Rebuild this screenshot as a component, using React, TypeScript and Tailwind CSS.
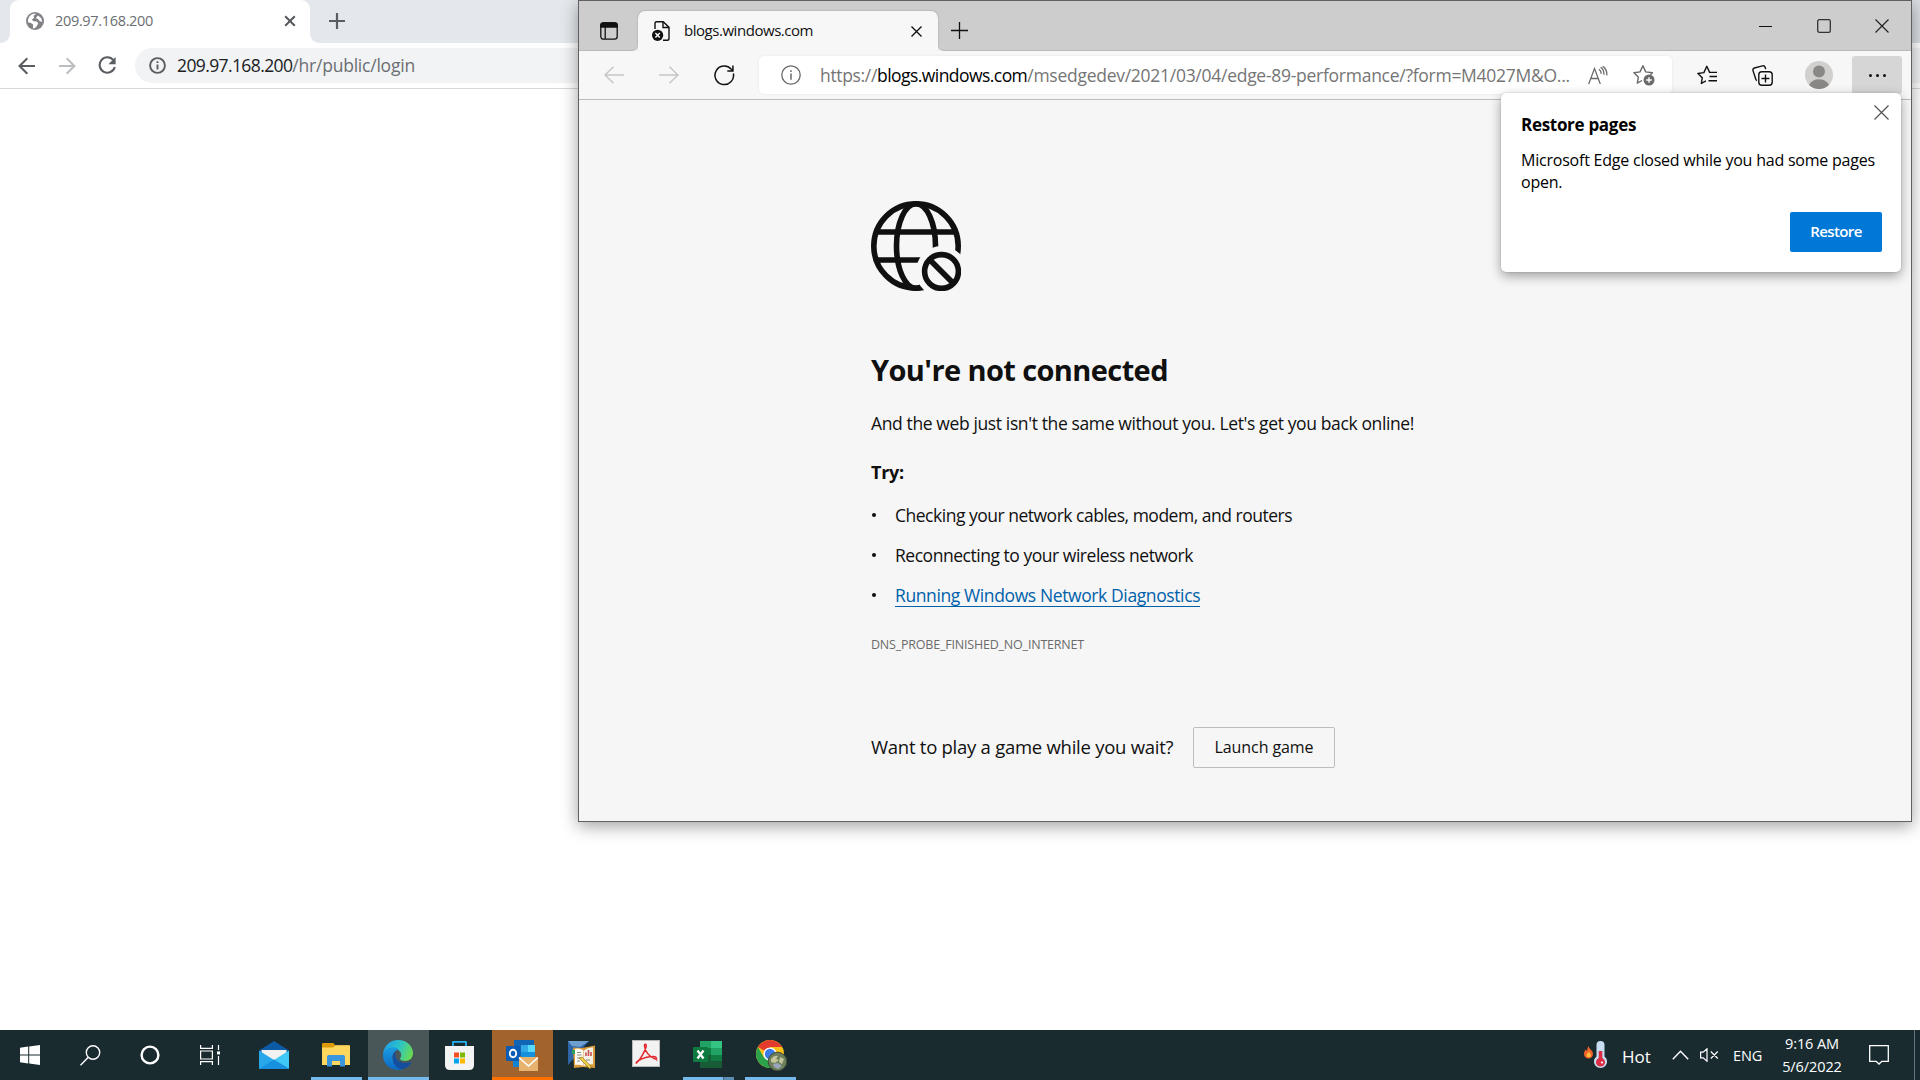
import type { ReactNode } from "react";

function ChromeWindow() {
  return (
    <div className="h-[1030px] bg-white">
      <div className="flex h-[43px] bg-[#e4e8ec]">
        <div className="flex h-[43px] w-2.5 items-end bg-white">
          <div className="h-full w-full rounded-br-[9px] bg-[#e4e8ec]" />
        </div>
        <div className="flex h-[43px] w-[300px] items-center rounded-t-[9px] bg-white pb-px pl-4">
          <svg width="18" height="18" viewBox="0 0 18 18">
            <circle cx="9" cy="9" r="9" fill="#808285" />
            <path d="M10.2 1.8 7.6 3.7 8 6.1l-2.1 1.5 1.5 1.6 3.3.3 1.6 2-1.5 2.4-1.9 2.4-2-.1.2-3.6-2.2-1.7-3-.6C1.7 6 3.8 2.6 7.4 1.7Z" fill="#fff" />
            <path d="m12 3.4 3.3 2.8.9 3.6-2.4-.5-1.6-2.1-2.4-1.2Z" fill="#fff" />
          </svg>
          <span className="-mt-px ml-[11px] text-[14.5px] tracking-[-0.33px] text-[#6b6e72]">209.97.168.200</span>
          <svg className="ml-auto mr-[14px]" width="12" height="12" viewBox="0 0 12 12" stroke="#54585c" strokeWidth="2">
            <path d="m1.2 1.2 9.6 9.6m0-9.6-9.6 9.6" />
          </svg>
        </div>
        <div className="flex flex-1 items-center bg-white">
          <div className="flex h-full w-full items-center rounded-bl-[9px] bg-[#e4e8ec] pb-px pl-[19px]">
            <svg width="16" height="16" viewBox="0 0 16 16" stroke="#5a5e62" strokeWidth="2.2">
              <path d="M8 0v16M0 8h16" />
            </svg>
          </div>
          <div className="h-full w-2 bg-[#dadfe4]" />
        </div>
      </div>
      <div className="flex h-[46px] items-center border-b border-[#d5d7d9] pl-[18px]">
        <svg width="18" height="18" viewBox="0 0 18 18" fill="none" stroke="#5a5e62" strokeWidth="2.1">
          <path d="M17 9H2M9.3 1.3 1.6 9l7.7 7.7" />
        </svg>
        <svg className="ml-[22px]" width="18" height="18" viewBox="0 0 18 18" fill="none" stroke="#bcbfc2" strokeWidth="2.1">
          <path d="M1 9h15M8.700 1.3 16.4 9l-7.700 7.700" />
        </svg>
        <svg className="ml-[22px]" width="19" height="19" viewBox="0 0 19 19" fill="none" stroke="#5a5e62" strokeWidth="2.1">
          <path d="M15.4 4.2A7.7 7.7 0 1 0 16.8 11" />
          <path d="M17.6 1v7.2h-7.2Z" fill="#5a5e62" stroke="none" />
        </svg>
        <div className="ml-[18px] flex h-[35px] flex-1 items-center rounded-l-full bg-[#f1f3f4] pl-3.5">
          <svg width="17" height="17" viewBox="0 0 17 17" fill="none" stroke="#5a5e62">
            <circle cx="8.5" cy="8.5" r="7.4" strokeWidth="1.9" />
            <path d="M8.5 7.4v5M8.5 4.2v1.9" strokeWidth="1.9" />
          </svg>
          <span className="ml-[11px] text-[17.5px] tracking-[-0.61px] text-[#202124]">209.97.168.200</span>
          <span className="text-[17.5px] tracking-[-0.22px] text-[#6b6e72]">/hr/public/login</span>
        </div>
      </div>
    </div>
  );
}

function TitleBar() {
  return (
    <div className="flex h-[50px] bg-[#cdcdcd]">
      <div className="flex w-[59px] items-end bg-[#f7f7f7]">
        <div className="flex h-full w-full items-center rounded-br-[6px] border-b border-[#b9b9b9] bg-[#cdcdcd] pl-[21px] pt-[11px]">
          <svg width="18" height="18" viewBox="0 0 18 18" fill="none" stroke="#111" strokeWidth="1.3">
            <rect x=".8" y=".8" width="16.4" height="16.4" rx="2.6" />
            <path d="M.8 5V3.4Q.8.8 3.4.8h11.2q2.6 0 2.6 2.6V5Z" fill="#111" />
            <path d="M5.2 5v12" />
          </svg>
        </div>
      </div>
      <div className="flex w-[300px] bg-[#cdcdcd] pt-2.5">
        <div className="flex h-10 w-full items-center rounded-t-[7px] bg-[#f7f7f7] pl-[14px] shadow-[0_0_2px_rgba(0,0,0,0.25)] [clip-path:inset(-3px_-3px_0_-3px)]">
          <svg width="18" height="20" viewBox="0 0 18 20" fill="none" stroke="#111" strokeWidth="1.4">
            <path d="M3 8V2.5Q3 .8 4.7.8h6.5L17 6.4v11q0 1.8-1.800 1.800H11" />
            <path d="M11 .9v5.6h6" />
            <circle cx="5.6" cy="14.3" r="5.6" fill="#111" stroke="none" />
            <path d="m3.4 12.1 4.4 4.4m0-4.4-4.4 4.4" stroke="#fff" />
          </svg>
          <span className="-mt-0.5 ml-3.5 text-[15px] tracking-[-0.46px] text-[#111]">blogs.windows.com</span>
          <svg className="ml-auto mr-4 mt-px" width="11" height="11" viewBox="0 0 11 11" stroke="#111" strokeWidth="1.4">
            <path d="m.5.5 10 10m0-10-10 10" />
          </svg>
        </div>
      </div>
      <div className="flex flex-1 bg-[#f7f7f7]">
        <div className="flex h-full w-full rounded-bl-[6px] border-b border-[#b9b9b9] bg-[#cdcdcd]">
          <svg className="ml-[13px] mt-[21px]" width="17" height="17" viewBox="0 0 17 17" stroke="#111" strokeWidth="1.3">
            <path d="M8.5 0v17M0 8.5h17" />
          </svg>
          <div className="ml-auto mr-[22px] mt-[17px] flex h-[15px] items-center">
            <svg width="14" height="14" viewBox="0 0 14 14" stroke="#111" strokeWidth="1">
              <path d="M0 7.5h13" />
            </svg>
            <svg className="ml-11" width="14" height="14" viewBox="0 0 14 14" fill="none" stroke="#333" strokeWidth="1.3">
              <rect x=".7" y=".7" width="12.6" height="12.6" rx="1.6" />
            </svg>
            <svg className="ml-11" width="14" height="14" viewBox="0 0 14 14" stroke="#222" strokeWidth="1.2">
              <path d="m.5.5 13 13m0-13-13 13" />
            </svg>
          </div>
        </div>
      </div>
    </div>
  );
}

function Toolbar() {
  return (
    <div className="flex h-[49px] items-center border-b border-[#bdbdbd] bg-[#f7f7f7] pl-[25px] pr-[9px]">
      <svg width="20" height="18" viewBox="0 0 20 18" fill="none" stroke="#c6c6c6" strokeWidth="1.4">
        <path d="M20 9H1M9.5.7 1 9l8.500 8.300" />
      </svg>
      <svg className="ml-[35px]" width="20" height="18" viewBox="0 0 20 18" fill="none" stroke="#c6c6c6" strokeWidth="1.4">
        <path d="M0 9h19M10.500.7 19 9l-8.500 8.300" />
      </svg>
      <svg className="ml-[35px]" width="21" height="21" viewBox="0 0 21 21" fill="none" stroke="#111" strokeWidth="1.5">
        <path d="M19.400 8.500A9.300 9.300 0 1 1 17.300 4.200L18.800 5.800" />
        <path d="M18.900.5v5.400h-5.600" />
      </svg>
      <div className="ml-[24px] flex h-[38px] w-[913px] items-center rounded-[5px] bg-white pl-[22px] shadow-[0_0_3px_rgba(0,0,0,0.07)]">
        <svg width="20" height="20" viewBox="0 0 20 20" fill="none" stroke="#6a6a6a" strokeWidth="1.3">
          <circle cx="10" cy="10" r="9.200" />
          <path d="M10 8.500v6.300M10 5.200v1.700" strokeWidth="1.500" />
        </svg>
        <div className="ml-[19px] w-[750px] whitespace-nowrap text-[17.5px] text-[#757575]">
          <span className="tracking-[-0.34px]">https://</span>
          <span className="tracking-[-0.55px] text-black">blogs.windows.com</span>
          <span className="tracking-[-0.27px]">/msedgedev/2021/03/04/edge-89-performance/?form=M4027M&amp;O...</span>
        </div>
        <svg className="ml-[18px]" width="20" height="19" viewBox="0 0 20 19" fill="none" stroke="#6a6a6a" strokeWidth="1.300">
          <path d="M.7 18 6.500 2.500 12.300 18M2.800 12.500h7.400M11 3.200q2.200 1.500 2.200 4.600M12.600 1.200q3.600 2.400 3.300 7.600M14.700.2q4.700 3.300 4 9.200" />
        </svg>
        <svg className="ml-[25px]" width="22" height="22" viewBox="0 0 22 22" fill="none" stroke="#6a6a6a" strokeWidth="1.400">
          <path d="M9 16.500 4.300 19.100l1-6-4.400-4.300 6.100-.9L9.900 1.700 12.700 7.900l6.700.9-2 2" strokeLinejoin="round" />
          <circle cx="16" cy="16" r="5.500" fill="#6a6a6a" stroke="none" />
          <path d="M16 13.200v5.600M13.200 16h5.600" stroke="#fff" />
        </svg>
      </div>
      <svg className="ml-[25px]" width="21" height="20" viewBox="0 0 21 20" fill="none" stroke="#111" strokeWidth="1.400">
        <path d="M8.900 15.900 4.300 18.500l1-5.800L.9 8.500l6-.9L9.800 1.300 12.600 7.400H20M12.500 11.500H20M11.500 15.700H20" strokeLinejoin="round" />
      </svg>
      <svg className="ml-[34px]" width="21" height="21" viewBox="0 0 21 21" fill="none" stroke="#111" strokeWidth="1.400">
        <rect x="6.800" y="6.800" width="13.400" height="13.400" rx="3" />
        <path d="M13.500 9.500v8M9.500 13.500h8M3.800 14.200 1 5.600Q.5 3.700 2.300 3L10.600.9q1.900-.5 2.500 1.300l.6 1.900M3.800 14.200q.4 1 1.200 1.300" />
      </svg>
      <svg className="ml-8" width="28" height="28" viewBox="0 0 28 28">
        <circle cx="14" cy="14" r="14" fill="#d2d0ce" />
        <circle cx="14" cy="10.500" r="6" fill="#8a8886" />
        <path d="M4 24q3-5.800 10-5.800T24 24q-4.400 4-10 4T4 24Z" fill="#8a8886" />
      </svg>
      <div className="ml-[19px] flex h-[38px] w-[50px] items-center justify-center gap-1 rounded-[3px] bg-[#d6d6d6]">
        <i className="size-[3px] rounded-full bg-[#111]" />
        <i className="size-[3px] rounded-full bg-[#111]" />
        <i className="size-[3px] rounded-full bg-[#111]" />
      </div>
    </div>
  );
}

function OfflineGlobe() {
  return (
    <svg width="90" height="90" viewBox="0 0 90 90" fill="none" stroke="#101010" strokeWidth="5.600">
      <defs>
        <mask id="badge">
          <rect width="90" height="90" fill="#fff" stroke="none" />
          <circle cx="70.500" cy="70.500" r="25.500" fill="#000" stroke="none" />
        </mask>
      </defs>
      <g mask="url(#badge)">
        <circle cx="45" cy="45" r="42.200" />
        <ellipse cx="45" cy="45" rx="19.500" ry="42.200" />
        <path d="M5 31h80M5 59h80" />
      </g>
      <circle cx="70.500" cy="70.500" r="16.900" />
      <path d="m58.500 58.500 24 24" />
    </svg>
  );
}

function ListRow({ children }: { children: ReactNode }) {
  return (
    <li className="flex h-6 items-center">
      <i className="ml-px mr-[19px] size-1 rounded-full bg-[#101010]" />
      {children}
    </li>
  );
}

function OfflinePage() {
  return (
    <div className="h-[721px] bg-[#f6f6f6] pl-[292px] pt-[101px] text-[17.5px] leading-6 text-[#101010]">
      <OfflineGlobe />
      <h1 className="mt-[59px] text-[29px] font-bold leading-10 tracking-[-0.6px]">You're not connected</h1>
      <p className="mt-[21px] tracking-[-0.38px]">And the web just isn't the same without you. Let's get you back online!</p>
      <p className="mt-[25px] text-lg font-bold leading-6 tracking-[-0.25px]">Try:</p>
      <ul className="mt-[19px] flex flex-col gap-4">
        <ListRow>
          <span className="tracking-[-0.49px]">Checking your network cables, modem, and routers</span>
        </ListRow>
        <ListRow>
          <span className="tracking-[-0.47px]">Reconnecting to your wireless network</span>
        </ListRow>
        <ListRow>
          <a className="h-6 border-b border-[#0061ab] tracking-[-0.39px] text-[#0061ab]">Running Windows Network Diagnostics</a>
        </ListRow>
      </ul>
      <p className="mt-7 text-[12.5px] font-medium leading-5 tracking-[-0.2px] text-[#6b6b6b]">DNS_PROBE_FINISHED_NO_INTERNET</p>
      <div className="mt-[72px] flex items-center">
        <span className="w-[322px] pb-0.5 text-[18.5px] tracking-[-0.26px]">Want to play a game while you wait?</span>
        <button className="flex h-[41px] w-[142px] items-center justify-center rounded-[2px] border border-[#bdbdbd] pb-0.5 text-base tracking-[-0.08px]">
          Launch game
        </button>
      </div>
    </div>
  );
}

function RestorePopup() {
  return (
    <div className="absolute left-[922px] top-[92px] h-[179px] w-[400px] rounded-[5px] bg-white pl-5 pt-5 text-black shadow-[0_4px_12px_rgba(0,0,0,0.36),0_0_2px_rgba(0,0,0,0.2)]">
      <svg className="absolute right-3 top-3" width="15" height="15" viewBox="0 0 15 15" stroke="#555" strokeWidth="1.300">
        <path d="m.5.5 14 14m0-14-14 14" />
      </svg>
      <h2 className="text-[17px] font-bold leading-6 tracking-[-0.3px]">Restore pages</h2>
      <p className="mt-[12px] text-base leading-[22px] tracking-[-0.22px]">
        Microsoft Edge closed while you had some pages
        <br />
        open.
      </p>
      <div className="mr-[19px] mt-[19px] flex justify-end">
        <button className="h-10 w-[92px] rounded-[2px] bg-[#0078d7] pb-0.5 text-[15px] font-semibold tracking-[-0.6px] text-white">Restore</button>
      </div>
    </div>
  );
}

function EdgeWindow() {
  return (
    <div className="absolute left-[578px] top-0 h-[822px] w-[1334px] border border-[#606060] bg-[#f6f6f6] shadow-[0_4px_16px_rgba(0,0,0,0.38)]">
      <TitleBar />
      <Toolbar />
      <OfflinePage />
      <RestorePopup />
    </div>
  );
}

function TaskButton({ children, mode }: { children: ReactNode; mode?: "open" | "stacked" | "active" | "alert" }) {
  const bg = mode === "active" ? "bg-[#4a5759]" : mode === "alert" ? "bg-[#a3632d]" : "";
  return (
    <div className={"mr-px flex h-[50px] w-[61px] flex-col items-center " + bg}>
      <div className="flex h-[47px] items-center pr-0.5 pt-[3px]">{children}</div>
      {mode === "active" && <div className="h-[3px] w-full bg-[#76b9ed]" />}
      {mode === "alert" && <div className="h-[3px] w-full bg-[#ff7000]" />}
      {mode === "open" && <div className="h-[3px] w-[51px] bg-[#76b9ed]" />}
      {mode === "stacked" && (
        <div className="flex h-[3px] w-[51px]">
          <div className="w-10 bg-[#76b9ed]" />
          <div className="w-px bg-[#41677f]" />
          <div className="w-2.5 bg-[#5b8db5]" />
        </div>
      )}
    </div>
  );
}

function Taskbar() {
  return (
    <div className="flex h-[50px] bg-[#1a2b30] text-white">
      <div className="flex w-[244px] items-center pl-5">
        <svg width="20" height="20" viewBox="0 0 20 20" fill="#fff">
          <path d="M0 2.800 8.200 1.600v7.900H0ZM9.200 1.500 20 0v9.500H9.200ZM0 10.500h8.200v7.900L0 17.200ZM9.200 10.500H20V20L9.200 18.500Z" />
        </svg>
        <svg className="ml-10" width="21" height="21" viewBox="0 0 21 21" fill="none" stroke="#fff" strokeWidth="1.400">
          <circle cx="13" cy="7.500" r="6.700" />
          <path d="M8.300 12.300.5 20.200" />
        </svg>
        <svg className="ml-[39px]" width="20" height="20" viewBox="0 0 20 20" fill="none" stroke="#fff" strokeWidth="2.400">
          <circle cx="10" cy="10" r="8.400" />
        </svg>
        <svg className="ml-10" width="20" height="20" viewBox="0 0 20 20" fill="none" stroke="#fff" strokeWidth="1.200">
          <path d="M.6 0v3.400h11.800V0M.6 20v-3.400h11.800V20M.6 6h11.800v8H.6ZM18.500 0v5M18.500 11v9" />
          <path d="M17 6.400h3v3h-3Z" fill="#fff" stroke="none" />
        </svg>
      </div>

      <TaskButton>
        <svg width="30" height="28" viewBox="0 0 30 28">
          <path d="M0 9.500 15 0l15 9.500V12H0Z" fill="#0c59a4" />
          <path d="M2.500 9h25v6L15 22 2.500 14Z" fill="#f1f1f1" />
          <path d="M0 9.500 15 19 30 28H0Z" fill="#28a8ea" />
          <path d="M30 9.500V28L15 19Z" fill="#3fc8f5" />
          <path d="M0 28 15 18.500 30 28Z" fill="#1790df" />
        </svg>
      </TaskButton>
      <TaskButton mode="open">
        <svg className="mb-px" width="28" height="24" viewBox="0 0 28 24">
          <path d="M0 1.200Q0 0 1.200 0h9.600q1 0 1.500 1l.9 1.500H28V8H0Z" fill="#dd9a07" />
          <path d="M0 4.500h11l2.500-2.200H27q1 0 1 1V22H0Z" fill="#ffd75e" />
          <path d="M5 23.500V14q0-2 2-2h14q2 0 2 2v9.500h-5V18h-8v5.500Z" fill="#3a96dd" />
        </svg>
      </TaskButton>
      <TaskButton mode="active">
        <svg width="30" height="30" viewBox="0 0 30 30">
          <defs>
            <linearGradient id="edgeTop" x1="0" x2="1" y1=".3" y2=".6">
              <stop stopColor="#209ee5" />
              <stop offset=".5" stopColor="#2bc3c9" />
              <stop offset="1" stopColor="#6bdc4e" />
            </linearGradient>
            <linearGradient id="edgeSide" x1="0" x2="0" y1="0" y2="1">
              <stop stopColor="#1b9de2" />
              <stop offset="1" stopColor="#0c68c4" />
            </linearGradient>
          </defs>
          <path d="M0 14.500C.8 5.500 7 0 15 0c9 0 15 6.300 15 13 0 5-3.600 8-8 8-3 0-5-1.200-5-2.300 0-.8 1.200-1.500 1.200-3.700 0-3.800-4-6.700-8.700-6.700-5 0-9 3-9.500 6.200Z" fill="url(#edgeTop)" />
          <path d="M0 15C0 11 4 7.200 9.500 7.200c2.500 0 4.800.8 6.500 2.200-4 .4-6.500 4-6.500 8 0 6 5 10.500 10 12C8 32 0 24.500 0 15Z" fill="url(#edgeSide)" />
          <path d="M13.700 10.700c-2.500 1.300-4 4-4 7C9.700 24.500 15 30 20 29c4-1 6.500-3.300 8.200-6.500.4-.7-.2-1-.8-.7-5.700 3-14.400.2-15.100-6.400-.2-2 .3-3.500 1.400-4.700Z" fill="#134f9e" />
        </svg>
      </TaskButton>
      <TaskButton>
        <svg width="29" height="29" viewBox="0 0 29 29">
          <path d="M8 7V1.200Q8 .8 8.400.8h12.200q.4 0 .4.400V7" fill="none" stroke="#27b2ee" strokeWidth="1.800" />
          <path d="M0 5h29v19q0 5-5 5H5q-5 0-5-5Z" fill="#f3f3f3" />
          <path d="M9 11.500h5v5H9Z" fill="#f25022" />
          <path d="M15 11.500h5v5h-5Z" fill="#7fba00" />
          <path d="M9 17.500h5v5H9Z" fill="#00a4ef" />
          <path d="M15 17.500h5v5h-5Z" fill="#ffb900" />
        </svg>
      </TaskButton>
      <TaskButton mode="alert">
        <svg width="32" height="31" viewBox="0 0 32 31">
          <path d="M8 0h20v16H8Z" fill="#1066b5" />
          <path d="M15 5h7v7h-7Z" fill="#32a9e7" />
          <path d="M22 5h7v7h-7Z" fill="#58d9fd" />
          <path d="M15 12h14v8H15Z" fill="#1490df" />
          <path d="M7 20h14v7H7Z" fill="#1483d2" />
          <rect y="6" width="14" height="15" rx="1.200" fill="#0a5cb5" />
          <ellipse cx="7" cy="13.500" rx="3.200" ry="3.700" fill="none" stroke="#fff" strokeWidth="1.900" />
          <path d="M13 17h19v14H13Z" fill="#e8b36f" />
          <path d="m13 17.500 9.500 8.500 9.500-8.500" fill="none" stroke="#fff" strokeWidth="1.600" />
        </svg>
      </TaskButton>
      <TaskButton>
        <svg className="-ml-1" width="28" height="29" viewBox="0 0 28 29">
          <path d="M0 0h21L0 24Z" fill="#2c66a8" />
          <path d="M0 0h21L12 6 4 5Z" fill="#6da0d0" />
          <path d="M5 6.500 14 7l13-2.500V27l-12-1-9 1Z" fill="#d99b3c" />
          <path d="M7 8q4-1.500 8.500 1.500V25q-4-2-8.500-1Z" fill="#fbfaf3" />
          <path d="M16 9.500Q20 6 25 6.500v16.800q-5-.3-9 1.700Z" fill="#f3f1e6" />
          <path d="M9 11.500h4M9 14h4.500M9 17h4M9 20h3M18 19h4" stroke="#8b8b86" strokeWidth="1.200" />
          <path d="M18 15V11.500M20.500 15V9M23 15v-4" stroke="#c9504f" strokeWidth="1.600" />
          <path d="M4 9h3v4H4Z" fill="#31a05b" />
          <path d="m11 17 3-1 9 9.500-1 2.500Z" fill="#f0cf45" stroke="#8f7420" strokeWidth=".7" />
        </svg>
      </TaskButton>
      <TaskButton>
        <svg className="mb-[3px]" width="28" height="27" viewBox="0 0 28 27">
          <rect x=".5" y=".5" width="27" height="26" fill="#f2f2f2" stroke="#b9b9b9" />
          <path d="M5 22.500C8 20 13 11.500 14.200 6.500 14.700 4 12.300 3 12.500 6c.3 5 5 11 10 12.800 3 .8 2.500-2.200-1-2.200-5 0-11 1.800-15.500 4.300-2.500 1.500-2 3-1 1.600Z" fill="none" stroke="#e3262b" strokeWidth="1.500" />
          <circle cx="24.800" cy="20" r=".8" fill="#e3262b" />
        </svg>
      </TaskButton>
      <TaskButton mode="stacked">
        <svg className="mb-px" width="29" height="27" viewBox="0 0 29 27">
          <path d="M7 0h11v7H7Z" fill="#21a366" />
          <path d="M18 0h11v7H18Z" fill="#33c481" />
          <path d="M7 7h11v7H7Z" fill="#107c41" />
          <path d="M18 7h11v7H18Z" fill="#21a366" />
          <path d="M18 14h11v6.500H18Z" fill="#107c41" />
          <path d="M7 14h11v6.500h11V27H7Z" fill="#185c37" />
          <rect y="6" width="15" height="15" rx="1.200" fill="#0f7a3f" />
          <path d="m4.500 9.500 6 8m0-8-6 8" stroke="#fff" strokeWidth="2.200" />
        </svg>
      </TaskButton>
      <TaskButton mode="open">
        <svg className="ml-[3px]" width="31" height="31" viewBox="0 0 31 31">
          <circle cx="14" cy="14" r="14" fill="#fbc116" />
          <path d="M14 14 1.900 7A14 14 0 0 1 26.100 7H14Z" fill="#e33b2e" />
          <path d="M1.900 7A14 14 0 0 0 14 28l6-10.500-12-.1Z" fill="#2ba24c" />
          <circle cx="14" cy="14" r="6.600" fill="#fff" />
          <circle cx="14" cy="14" r="5.200" fill="#3a7de8" />
          <circle cx="21.500" cy="21.500" r="9.300" fill="#6f7f5c" stroke="#3f4a38" />
          <path d="M15 19q3-4 7-3l-2 3 3 1-4 3-4-1ZM24 17l4 2-2 5-3-2Z" fill="#c3c69b" />
          <path d="m17 24 5-1 4 3-4 3-4-2Z" fill="#9ba5bb" />
        </svg>
      </TaskButton>

      <div className="ml-auto flex items-center">
        <svg width="24" height="28" viewBox="0 0 24 28">
          <path d="M4.500 5c.2 3 4.500 4 4.500 8a4.500 4.500 0 0 1-9 0C0 10.500 1 10 1.300 8.500l1.400 1.200C3.800 8.500 3.200 6.500 4.500 5Z" fill="#f0622b" />
          <path d="M5 10c0 2 2 2.500 2 4a2.300 2.300 0 0 1-4.600 0C2.400 12.500 4.500 12 5 10Z" fill="#fdbb3c" />
          <path d="M12.500 4a4 4 0 0 1 8 0v11.500a6.500 6.500 0 1 1-8 0Z" fill="#c8dff2" />
          <path d="M14.700 10h3.600v7a4.500 4.500 0 1 1-3.600 0Z" fill="#dc2e45" />
          <circle cx="18" cy="21.500" r="1.100" fill="#fff" />
        </svg>
        <span className="ml-[14px] mt-[3px] w-[50px] text-[17px]">Hot</span>
        <svg width="17" height="10" viewBox="0 0 17 10" fill="none" stroke="#fff" strokeWidth="1.400">
          <path d="m.8 9.200 7.700-8 7.700 8" />
        </svg>
        <svg className="ml-[11px]" width="19" height="14" viewBox="0 0 19 14" fill="none" stroke="#fff" strokeWidth="1.200">
          <path d="M.6 4.200h2.600L7 .8v12.400L3.200 9.800H.6ZM10.800 3.500l7 7m0-7-7 7" />
        </svg>
        <span className="ml-[14px] mt-0.5 w-[31px] text-[14.5px] tracking-[-0.17px]">ENG</span>
        <div className="ml-[17px] flex w-[62px] flex-col items-center text-[14.5px] leading-[23px] tracking-[-0.09px]">
          <span>9:16 AM</span>
          <span>5/6/2022</span>
        </div>
        <svg className="ml-[26px]" width="20" height="20" viewBox="0 0 20 20" fill="none" stroke="#fff" strokeWidth="1.300">
          <path d="M.7.7h18.600v15.600h-6.500L10 19l-2.800-2.700H.7Z" />
        </svg>
        <div className="ml-[25px] h-[50px] w-[6px] border-l border-[#66737a]" />
      </div>
    </div>
  );
}

export default function App() {
  return (
    <div className="relative h-[1080px] w-[1920px] overflow-hidden bg-white font-['Open_Sans',sans-serif]">
      <ChromeWindow />
      <EdgeWindow />
      <Taskbar />
    </div>
  );
}
